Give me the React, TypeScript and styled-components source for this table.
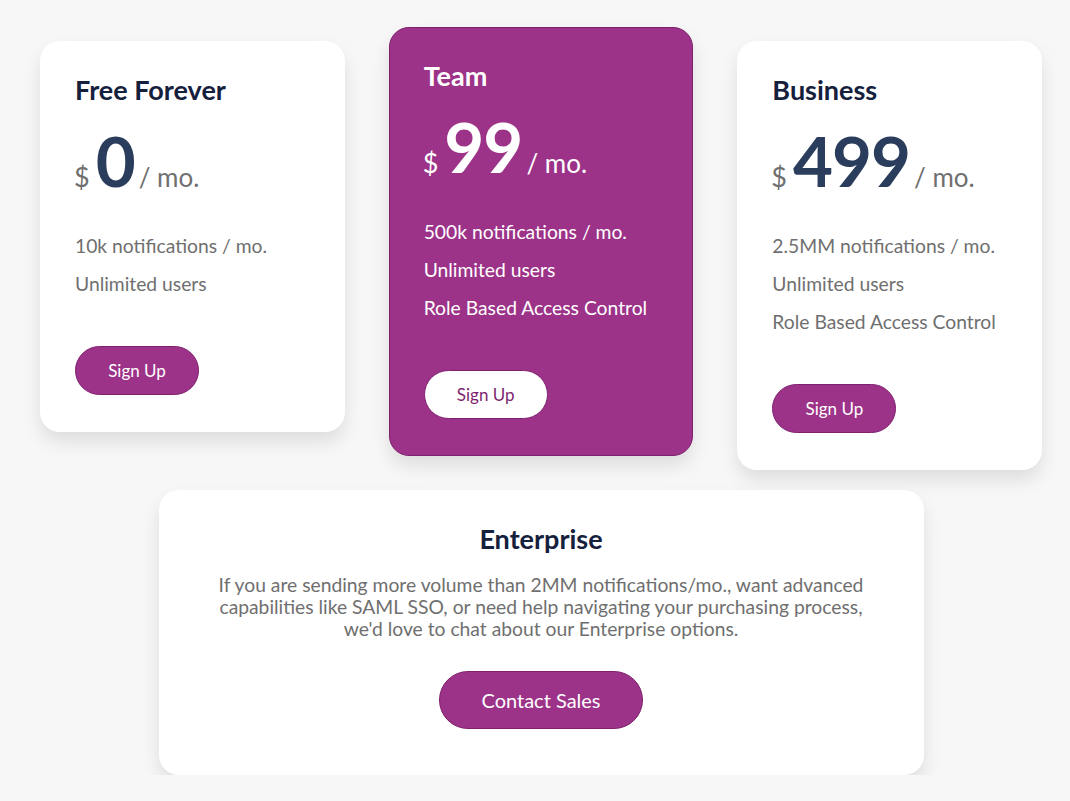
import React from "react";
import styled, { createGlobalStyle } from "styled-components";

const GlobalStyle = createGlobalStyle`
  html, body { margin: 0; padding: 0; background: #f7f7f7; }
  body { font-family: Lato, "Noto Sans", sans-serif; -webkit-font-smoothing: antialiased; }
`;

const Page = styled.div`
  width: 1002px;
  padding: 27px 0 0 40px;
  display: flex;
  flex-direction: column;
  gap: 20px;
`;

const Row = styled.div`
  display: flex;
  align-items: flex-start;
  gap: 44px;
`;

const Card = styled.div<{ $featured?: boolean }>`
  box-sizing: border-box;
  width: 305px;
  margin-top: ${(p) => (p.$featured ? "0" : "14px")};
  padding: 36px 35px 36px 34px;
  border-radius: 20px;
  background: ${(p) => (p.$featured ? "#9c3388" : "#ffffff")};
  border: 1px solid ${(p) => (p.$featured ? "#7e1f6f" : "transparent")};
  box-shadow: 0 10px 18px rgba(0, 0, 0, 0.1);
  display: flex;
  flex-direction: column;
`;

const PlanName = styled.h2<{ $light?: boolean }>`
  margin: 0;
  font-size: 27px;
  line-height: 24px;
  font-weight: 700;
  color: ${(p) => (p.$light ? "#ffffff" : "#15203d")};
`;

const PriceLine = styled.div<{ $light?: boolean }>`
  margin-top: 24px;
  display: flex;
  align-items: baseline;
  height: 70px;
  color: ${(p) => (p.$light ? "#ffffff" : "#6f6f6f")};
`;

const Currency = styled.span`
  font-size: 27px;
  margin-right: 6px;
  margin-left: -1px;
`;

const Amount = styled.span<{ $light?: boolean }>`
  font-size: 69px;
  line-height: 70px;
  font-weight: 700;
  letter-spacing: -1px;
  color: ${(p) => (p.$light ? "#ffffff" : "#2b3d5c")};
`;

const Period = styled.span`
  font-size: 26px;
  margin-left: 4px;
`;

const Features = styled.ul<{ $light?: boolean }>`
  list-style: none;
  margin: 31px 0 0;
  padding: 0;
  display: flex;
  flex-direction: column;
  color: ${(p) => (p.$light ? "#ffffff" : "#6f6f6f")};
`;

const Feature = styled.li`
  font-size: 19.3px;
  line-height: 38px;
`;

const PillButton = styled.button<{ $inverted?: boolean; $large?: boolean }>`
  box-sizing: border-box;
  width: ${(p) => (p.$large ? "204px" : "124px")};
  height: ${(p) => (p.$large ? "58px" : "49px")};
  border-radius: 999px;
  border: 1px solid #7e1f6f;
  background: ${(p) => (p.$inverted ? "#ffffff" : "#9c3388")};
  color: ${(p) => (p.$inverted ? "#7e1f6f" : "#ffffff")};
  font-family: Lato, "Noto Sans", sans-serif;
  font-size: ${(p) => (p.$large ? "20px" : "17px")};
  cursor: pointer;
  padding: 0;
`;

const CardButton = styled(PillButton)`
  margin-top: 43px;
`;

const Enterprise = styled.div`
  box-sizing: border-box;
  width: 765px;
  margin: 0 auto;
  padding: 34px 40px 46px;
  border-radius: 20px;
  background: #ffffff;
  box-shadow: 0 10px 18px rgba(0, 0, 0, 0.1);
  display: flex;
  flex-direction: column;
  align-items: center;
  text-align: center;
`;

const EnterpriseTitle = styled.h2`
  margin: 0;
  font-size: 27px;
  line-height: 30px;
  font-weight: 700;
  color: #15203d;
`;

const EnterpriseText = styled.p`
  margin: 20px 0 0;
  width: 668px;
  font-size: 19.3px;
  line-height: 22px;
  color: #6f6f6f;
`;

const EnterpriseButton = styled(PillButton)`
  margin-top: 31px;
`;

type Plan = {
  name: string;
  price: string;
  features: string[];
  featured?: boolean;
};

const plans: Plan[] = [
  { name: "Free Forever", price: "0", features: ["10k notifications / mo.", "Unlimited users"] },
  {
    name: "Team",
    price: "99",
    featured: true,
    features: ["500k notifications / mo.", "Unlimited users", "Role Based Access Control"],
  },
  {
    name: "Business",
    price: "499",
    features: ["2.5MM notifications / mo.", "Unlimited users", "Role Based Access Control"],
  },
];

export default function App() {
  return (
    <>
      <GlobalStyle />
      <Page>
        <Row>
          {plans.map((plan) => (
            <Card key={plan.name} $featured={plan.featured}>
              <PlanName $light={plan.featured}>{plan.name}</PlanName>
              <PriceLine $light={plan.featured}>
                <Currency>$</Currency>
                <Amount $light={plan.featured}>{plan.price}</Amount>
                <Period>/ mo.</Period>
              </PriceLine>
              <Features $light={plan.featured}>
                {plan.features.map((f) => (
                  <Feature key={f}>{f}</Feature>
                ))}
              </Features>
              <CardButton $inverted={plan.featured}>Sign Up</CardButton>
            </Card>
          ))}
        </Row>
        <Enterprise>
          <EnterpriseTitle>Enterprise</EnterpriseTitle>
          <EnterpriseText>
            If you are sending more volume than 2MM notifications/mo., want advanced capabilities like
            SAML SSO, or need help navigating your purchasing process, we'd love to chat about our
            Enterprise options.
          </EnterpriseText>
          <EnterpriseButton $large>Contact Sales</EnterpriseButton>
        </Enterprise>
      </Page>
    </>
  );
}
